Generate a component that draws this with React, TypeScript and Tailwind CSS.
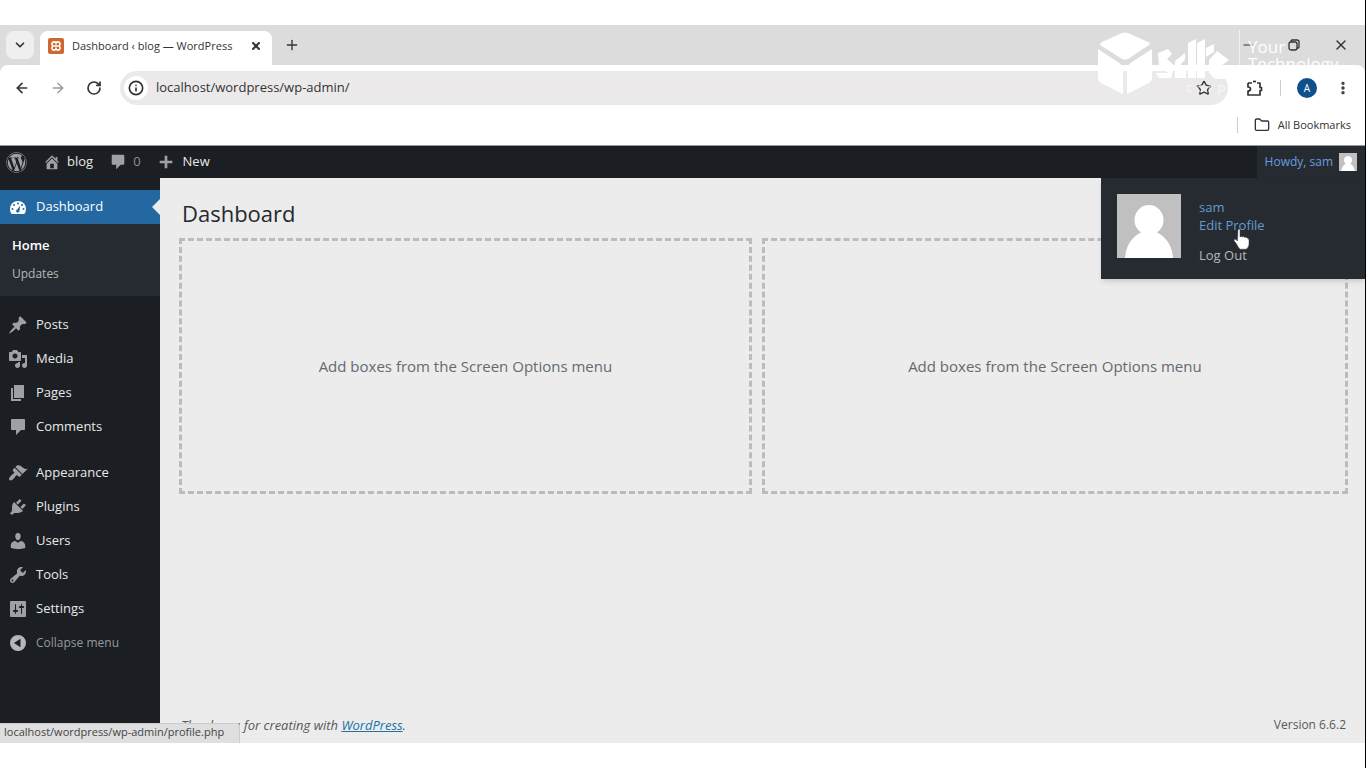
import React from 'react';
import { ArrowLeft, ArrowRight, ChevronDown, EllipsisVertical, Folder, Info, Minus, Plus, RotateCw, Star, X } from 'lucide-react';
import { FaWordpress } from 'react-icons/fa';

const ICONS = {
  post: 'M10.44 3.02l1.82-1.82 6.36 6.35-1.83 1.82c-1.05-.68-2.48-.57-3.41.36l-.75.75c-.92.93-1.04 2.35-.35 3.41l-1.83 1.82-2.41-2.41-2.8 2.79c-.42.42-3.38 2.71-3.8 2.29s1.86-3.39 2.28-3.81l2.79-2.79L4.1 9.36l1.83-1.82c1.05.69 2.48.57 3.4-.36l.75-.75c.93-.92 1.05-2.35.36-3.41z',
  media: 'M13 11V4c0-.55-.45-1-1-1h-1.67L9 1H5L3.67 3H2c-.55 0-1 .45-1 1v7c0 .55.45 1 1 1h10c.55 0 1-.45 1-1zM7 4.5c1.38 0 2.5 1.12 2.5 2.5S8.38 9.5 7 9.5 4.5 8.38 4.5 7 5.62 4.5 7 4.5zM14 6h5v10.5c0 1.38-1.12 2.5-2.5 2.5S14 17.88 14 16.5s1.12-2.5 2.5-2.5c.17 0 .34.02.5.05V9h-3V6zm-4 8.05V13h2v3.5c0 1.38-1.12 2.5-2.5 2.5S7 17.88 7 16.5 8.12 14 9.5 14c.17 0 .34.02.5.05z',
  page: 'M6 15V2h10v13H6zm-1 1h8v2H3V5h2v11z',
  comment: 'M4 2h12c.55 0 1 .45 1 1v9c0 .55-.45 1-1 1h-3l-5 5v-5H4c-.55 0-1-.45-1-1V3c0-.55.45-1 1-1z',
  appearance: 'M14.48 11.06L7.41 3.99l1.5-1.5c.5-.56 2.3-.47 3.51.32 1.21.8 1.43 1.28 2.91 2.1 1.18.64 2.45 1.26 4.45.85zm-.71.71L6.7 4.7 4.93 6.47c-.39.39-.39 1.02 0 1.41l1.06 1.06c.39.39.39 1.03 0 1.42-.6.6-1.43 1.11-2.21 1.69-.35.26-.7.53-1.01.84C1.43 14.23.4 16.08 1.4 17.07c.99 1 2.84-.03 4.18-1.36.31-.31.58-.66.85-1.02.57-.78 1.08-1.61 1.69-2.21.39-.39 1.02-.39 1.41 0l1.06 1.06c.39.39 1.02.39 1.41 0z',
  plugins: 'M13.11 4.36L9.87 7.6 8 5.73l3.24-3.24c.35-.34 1.05-.2 1.56.32.52.51.66 1.21.31 1.55zm-8 1.77l.91-1.12 9.01 9.01-1.19.84c-.71.71-2.63 1.16-3.82 1.16H6.14L4.9 17.26c-.59.59-1.54.59-2.12 0-.59-.58-.59-1.53 0-2.12l1.24-1.24v-3.88c0-1.13.4-3.19 1.09-3.89zm7.26 3.97l3.24-3.24c.34-.35 1.04-.21 1.55.31.52.51.66 1.21.31 1.55l-3.24 3.25z',
  users: 'M10 9.25c-2.27 0-2.73-3.44-2.73-3.44C7 4.02 7.82 2 9.97 2c2.16 0 2.98 2.02 2.71 3.81 0 0-.41 3.44-2.68 3.44zm0 2.57L12.72 10c2.39 0 4.52 2.33 4.52 4.53v2.49s-3.65 1.13-7.24 1.13c-3.65 0-7.24-1.13-7.24-1.13v-2.49c0-2.25 1.94-4.48 4.47-4.48z',
  tools: 'M16.68 9.77c-1.34 1.34-3.3 1.67-4.95.99l-5.41 6.52c-.99.99-2.59.99-3.58 0s-.99-2.59 0-3.57l6.52-5.42c-.68-1.65-.35-3.61.99-4.95 1.28-1.28 3.12-1.62 4.72-1.06l-2.89 2.89 2.82 2.82 2.86-2.87c.53 1.58.18 3.39-1.08 4.65zM3.81 16.21c.4.39 1.04.39 1.43 0 .4-.4.4-1.04 0-1.43-.39-.4-1.03-.4-1.43 0-.39.39-.39 1.03 0 1.43z',
  settings: 'M18 17V3c0-.55-.45-1-1-1H3c-.55 0-1 .45-1 1v14c0 .55.45 1 1 1h14c.55 0 1-.45 1-1zM8 11h1c.55 0 1 .45 1 1s-.45 1-1 1H8v1.5c0 .28-.22.5-.5.5s-.5-.22-.5-.5V13H6c-.55 0-1-.45-1-1s.45-1 1-1h1V5.5c0-.28.22-.5.5-.5s.5.22.5.5V11zm5-2h-1c-.55 0-1-.45-1-1s.45-1 1-1h1V5.5c0-.28.22-.5.5-.5s.5.22.5.5V7h1c.55 0 1 .45 1 1s-.45 1-1 1h-1v5.5c0 .28-.22.5-.5.5s-.5-.22-.5-.5V9z',
  collapse: 'M10 2a8 8 0 1 0 0 16a8 8 0 1 0 0-16zM12.500 5.800v8.400L6 10z',
  home: 'M16 8.500l1.530 1.530-1.060 1.060L10 4.600l-6.470 6.490-1.060-1.060L10 2.500l4 4v-2h2v4zm-6-2.460l6 5.990V18H4v-5.970zM12 17v-5H8v5h4z',
  plus: 'M17 8.500v3h-5.500V17h-3v-5.500H3v-3h5.500V3h3v5.500z',
};

type IconName = keyof typeof ICONS;

const DashIcon: React.FC<{ name: IconName; className?: string }> = ({ name, className = 'h-5 w-5' }) => (
  <svg viewBox="0 0 20 20" fill="currentColor" fillRule="evenodd" className={`flex-shrink-0 ${className}`}>
    <path d={ICONS[name]} />
  </svg>
);

const DashboardIcon = () => (
  <svg viewBox="0 0 20 20" className="h-5 w-5 flex-shrink-0">
    <path d="M3.760 17h12.480A8 8 0 0 0 18 12a8 8 0 0 0-16 0c0 1.900.660 3.640 1.760 5z" fill="#fff" />
    <g fill="#2468a2">
      <circle cx="10" cy="6.500" r="1" />
      <circle cx="6" cy="8" r="1" />
      <circle cx="14" cy="8" r="1" />
      <circle cx="4.500" cy="12" r="1" />
      <circle cx="15.500" cy="12" r="1" />
      <path d="M12.300 8.500l-.8 5.200a1.700 1.700 0 1 1-2.100-1.400z" />
    </g>
  </svg>
);

const Avatar: React.FC<{ className: string }> = ({ className }) => (
  <svg viewBox="0 0 64 64" className={`flex-shrink-0 ${className}`}>
    <rect width="64" height="64" fill="#c0c0c0" />
    <ellipse cx="32" cy="26" rx="14.500" ry="15" fill="#fff" />
    <path d="M8 64c1-14 8-22 17-26h14c9 4 16 12 17 26z" fill="#fff" />
  </svg>
);

const XamppIcon = () => (
  <svg viewBox="0 0 16 16" className="h-4 w-4 flex-shrink-0" fill="none">
    <rect width="16" height="16" rx="2" fill="#cf6830" />
    <path d="M8 6.500V5.200a2.100 2.100 0 1 0-2.400 2.800a2.100 2.100 0 1 0 2.400 2.800V9.500V10.800a2.100 2.100 0 1 0 2.400-2.800a2.100 2.100 0 1 0-2.400-2.800M6 8h4" stroke="#fff" strokeWidth="1.600" />
  </svg>
);

const ExtensionsIcon = () => (
  <svg viewBox="0 0 18 18" className="h-[18px] w-[18px]" fill="none" stroke="currentColor" strokeWidth="1.700" strokeLinejoin="round">
    <path d="M2 4h4M11 4h3v4.500h1.500v3H14V16H2v-4q2.500 0 2.500-2T2 8V4" />
    <path d="M7 2.500h3" />
  </svg>
);

const Watermark = () => (
  <div className="pointer-events-none absolute right-0 top-[30px] z-20 flex h-[66px] w-[268px] text-white">
    <svg viewBox="0 0 142 66" className="h-[66px] w-[142px] flex-shrink-0" fill="currentColor">
      <path d="M3 15q0-2 2-3L25 3q3-1 6 0l20 9q3 1 1 3L34 27q-6 5-12 0z" />
      <path d="M1 19l20 13q5 3 5 8v24L4 53q-3-2-3-5zM55 19v29q0 3-3 5L30 64V40q0-5 5-8z" />
      <path d="M61 23l10-4 4 5-5 5 7 6-3 13H62l-3-5h12l-9-8zM78 31l10-8v7l-4 4v5h5v9H78zM91 13l8-4v39h-8zM100 13l8-4v39h-8zM109 18l8-4v8l-8 5zM112 30l8-9 12 9-8 6h-3v6h8v7h-11l-6-6z" />
    </svg>
    <div className="border-l border-white/60 pl-2 pt-2 text-[17px] leading-[17px]">
      <p>Your</p>
      <p>Technology</p>
    </div>
    <div className="absolute left-[89px] top-[49px] flex gap-1 text-[13px] leading-4 text-white/70">
      <span>c</span>
      <span>o</span>
      <span>r</span>
      <span>p</span>
    </div>
  </div>
);

const BrowserChrome = () => (
  <header className="bg-[#dcdcdc] text-[#333]">
    <div className="flex h-10 items-end">
      <button aria-label="Search tabs" className="mb-1.5 ml-1.5 flex h-7 w-7 items-center justify-center rounded-lg bg-[#efefef]">
        <ChevronDown className="h-3.5 w-3.5" strokeWidth={3} />
      </button>
      <div className="ml-1.5 flex h-[34px] w-[232px] items-center rounded-t-lg bg-white pb-1 pl-2 pr-2.5">
        <XamppIcon />
        <span className="ml-2 flex-1 whitespace-nowrap text-[11px]">Dashboard ‹ blog — WordPress</span>
        <button aria-label="Close tab">
          <X className="h-3 w-3" strokeWidth={4} />
        </button>
      </div>
      <button aria-label="New tab" className="mb-3 ml-3">
        <Plus className="h-4 w-4" />
      </button>
      <div className="mb-3 ml-auto flex items-center gap-8 pr-4">
        <button aria-label="Minimize">
          <Minus className="h-3.5 w-3.5" />
        </button>
        <button aria-label="Restore">
          <svg viewBox="0 0 14 14" className="h-3.5 w-3.5" fill="none" stroke="currentColor" strokeWidth="1.300">
            <rect x="2" y="4" width="8" height="8" rx="2" />
            <path d="M4 4V3q0-1 1-1h5q2 0 2 2v5q0 1-1 1h-1" />
          </svg>
        </button>
        <button aria-label="Close">
          <X className="h-4 w-4" strokeWidth={2} />
        </button>
      </div>
    </div>
    <div className="rounded-t-lg bg-white">
      <div className="flex h-[46px] items-center pl-3.5 pr-3.5">
        <button aria-label="Back"><ArrowLeft className="h-4 w-4" strokeWidth={2.5} /></button>
        <button aria-label="Forward" className="ml-5 text-[#999]"><ArrowRight className="h-4 w-4" /></button>
        <button aria-label="Reload" className="ml-5"><RotateCw className="h-4 w-4" strokeWidth={2.5} /></button>
        <div className="ml-[18px] flex h-[34px] flex-1 items-center rounded-full bg-[#ebe9ea] pl-1 pr-4">
          <span className="flex h-6 w-6 items-center justify-center rounded-full bg-white">
            <Info className="h-4 w-4" strokeWidth={2.5} />
          </span>
          <input aria-label="Address" defaultValue="localhost/wordpress/wp-admin/" className="ml-2 flex-1 bg-transparent text-[13px] outline-none" />
          <button aria-label="Bookmark this page"><Star className="h-4 w-4" /></button>
        </div>
        <button aria-label="Extensions" className="ml-[18px]"><ExtensionsIcon /></button>
        <span className="ml-4 h-4 w-px bg-[#ccc]" />
        <button aria-label="Account" className="ml-4 flex h-5 w-5 items-center justify-center rounded-full bg-[#0f508c] text-[10px] text-white">A</button>
        <button aria-label="Browser menu" className="ml-[18px]"><EllipsisVertical className="h-4 w-4" strokeWidth={3} /></button>
      </div>
      <div className="flex h-[35px] items-center justify-end border-b border-[#999] pb-1.5 pr-3.5">
        <span className="h-4 w-px bg-[#ccc]" />
        <button className="ml-4 flex items-center gap-2 text-[11px]">
          <Folder className="h-4 w-4" />
          All Bookmarks
        </button>
      </div>
    </div>
  </header>
);

const ProfileMenu = () => (
  <div className="absolute right-0 top-8 z-10 flex h-[101px] w-[264px] bg-[#262b31] p-4 shadow-md">
    <Avatar className="h-16 w-16" />
    <div className="ml-[18px] flex flex-col pt-1 text-[13px] leading-[18px] text-[#659bce]">
      <a href="#profile">sam</a>
      <a href="#profile">Edit Profile</a>
      <a href="#logout" className="mt-3 text-[#b4b7ba]">Log Out</a>
    </div>
    <svg viewBox="0 0 17 22" className="absolute left-[132px] top-[50px] h-[22px] w-[17px]" fill="#fff" stroke="#444" strokeWidth="0.500">
      <path d="M5 1.500q1.500-1 2 .5v7q1-1.200 2.300 0 1.300-1 2.500.4 1.500-.8 2.600.8 1.500 0 1.600 2v4q-.5 4-3 5H7q-2-2-3-4.500L1 12.500q0-2 2-1l1.500 1.500z" />
    </svg>
  </div>
);

const AdminBar = () => (
  <div className="relative flex h-8 items-center bg-[#1b1e22] pl-1.5 text-[13px] text-[#e8e8e8]">
    <a href="#wp" aria-label="About WordPress" className="text-[#9da1a6]"><FaWordpress className="h-[21px] w-[21px]" /></a>
    <a href="#site" className="ml-4 flex items-center gap-1.5">
      <DashIcon name="home" className="h-[18px] w-[18px] text-[#9da1a6]" />
      blog
    </a>
    <a href="#comments" className="ml-4 flex items-center gap-1.5 text-[#8b8f94]">
      <DashIcon name="comment" className="h-[18px] w-[18px] text-[#9da1a6]" />
      0
    </a>
    <a href="#new" className="ml-4 flex items-center gap-2">
      <DashIcon name="plus" className="h-[18px] w-[18px] text-[#9da1a6]" />
      New
    </a>
    <a href="#account" className="ml-auto flex h-8 items-center gap-1.5 bg-[#262b31] pl-2 pr-2 text-xs text-[#669de0]">
      Howdy, sam
      <Avatar className="h-[18px] w-[18px]" />
    </a>
    <ProfileMenu />
  </div>
);

const MenuItem: React.FC<{ icon: IconName; label: string }> = ({ icon, label }) => (
  <li>
    <a href={`#${label.toLowerCase()}`} className="flex h-[34px] items-center gap-2 pl-2 text-[#e8e8e8]">
      <DashIcon name={icon} className="h-5 w-5 text-[#9da1a6]" />
      {label}
    </a>
  </li>
);

const Sidebar = () => (
  <nav className="w-40 flex-shrink-0 bg-[#1b1e22] pt-3 text-[13px]">
    <a href="#dashboard" className="relative flex h-[34px] items-center gap-2 bg-[#2468a2] pl-2 text-white">
      <DashboardIcon />
      Dashboard
      <span className="absolute right-0 top-[9px] border-y-8 border-r-8 border-y-transparent border-r-[#ececec]" />
    </a>
    <ul className="bg-[#262b31] px-3 pb-2 pt-2">
      <li><a href="#home" className="flex h-7 items-center font-semibold text-white">Home</a></li>
      <li><a href="#updates" className="flex h-7 items-center text-xs text-[#b4b7ba]">Updates</a></li>
    </ul>
    <ul className="pt-3">
      <MenuItem icon="post" label="Posts" />
      <MenuItem icon="media" label="Media" />
      <MenuItem icon="page" label="Pages" />
      <MenuItem icon="comment" label="Comments" />
    </ul>
    <ul className="pt-3">
      <MenuItem icon="appearance" label="Appearance" />
      <MenuItem icon="plugins" label="Plugins" />
      <MenuItem icon="users" label="Users" />
      <MenuItem icon="tools" label="Tools" />
      <MenuItem icon="settings" label="Settings" />
    </ul>
    <button className="flex h-[34px] items-center gap-2 pl-2 text-xs text-[#96999d]">
      <DashIcon name="collapse" className="h-5 w-5 text-[#b4b7ba]" />
      Collapse menu
    </button>
  </nav>
);

const EmptyBox: React.FC<{ className: string }> = ({ className }) => (
  <div className={`flex h-64 items-center justify-center border-[3px] border-dashed border-[#bcbcbc] text-[15px] text-[#666a6e] ${className}`}>
    Add boxes from the Screen Options menu
  </div>
);

export default function App() {
  return (
    <div className="relative flex min-h-screen flex-col border-r border-black bg-white py-[25px] font-['Open_Sans','Noto_Sans',sans-serif]">
      <BrowserChrome />
      <Watermark />
      <AdminBar />
      <div className="relative flex flex-1 bg-[#ececec]">
        <Sidebar />
        <main className="flex flex-1 flex-col pl-[19px] pr-[17px] pt-5">
          <h1 className="pl-[3px] text-[22px] leading-[30px] text-[#26292c]">Dashboard</h1>
          <div className="mt-2.5 flex gap-2.5">
            <EmptyBox className="w-[49%]" />
            <EmptyBox className="flex-1" />
          </div>
          <footer className="mt-auto flex items-center justify-between px-0.5 pb-2 text-[#55595d]">
            <p className="text-[13px] italic">
              Thank you for creating with <a href="#wordpress" className="text-[#2271a5] underline">WordPress</a>.
            </p>
            <p className="text-xs">Version 6.6.2</p>
          </footer>
        </main>
        <div className="absolute bottom-0 left-0 h-5 w-60 whitespace-nowrap rounded-tr-sm border-r border-t border-[#ccc] bg-[#dfdfdf] pl-1 text-[11px] leading-4 text-[#444]">
          localhost/wordpress/wp-admin/profile.php
        </div>
      </div>
    </div>
  );
}
